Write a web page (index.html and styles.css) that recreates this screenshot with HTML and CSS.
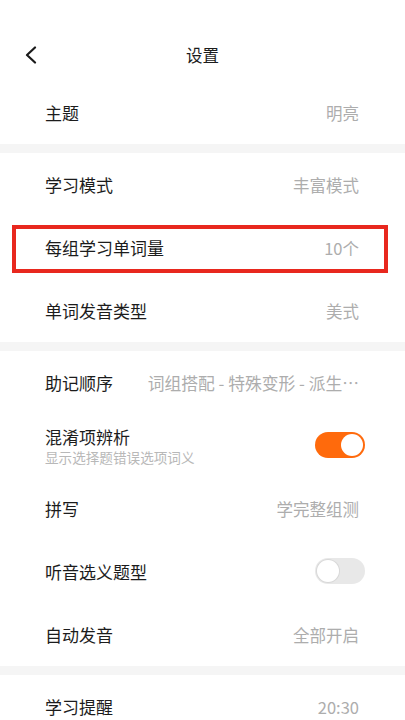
FILE: index.html
```html
<!DOCTYPE html>
<html lang="zh-CN">
<head>
<meta charset="utf-8">
<title>设置</title>
<link rel="stylesheet" href="styles.css">
</head>
<body>
<div class="page">
  <header class="header">
    <span class="back">
      <svg width="14" height="18" viewBox="0 0 14 18"><path d="M11 1.5 L3 9 L11 16.5" fill="none" stroke="#1a1a1a" stroke-width="2.2" stroke-linecap="round" stroke-linejoin="round"/></svg>
    </span>
    <h1 class="title">设置</h1>
  </header>

  <section class="group">
    <div class="row first"><span class="label">主题</span><span class="value">明亮</span></div>
  </section>
  <div class="gap"></div>

  <section class="group">
    <div class="row"><span class="label">学习模式</span><span class="value">丰富模式</span></div>
    <div class="row highlighted"><span class="label">每组学习单词量</span><span class="value">10个</span><span class="mark"></span></div>
    <div class="row"><span class="label">单词发音类型</span><span class="value">美式</span></div>
  </section>
  <div class="gap"></div>

  <section class="group">
    <div class="row"><span class="label">助记顺序</span><span class="value long">词组搭配 - 特殊变形 - 派生…</span></div>
    <div class="row">
      <div class="stack"><span class="label">混淆项辨析</span><span class="sub">显示选择题错误选项词义</span></div>
      <span class="toggle on"><span class="knob"></span></span>
    </div>
    <div class="row"><span class="label">拼写</span><span class="value">学完整组测</span></div>
    <div class="row">
      <span class="label">听音选义题型</span>
      <span class="toggle off"><span class="knob"></span></span>
    </div>
    <div class="row"><span class="label">自动发音</span><span class="value">全部开启</span></div>
  </section>
  <div class="gap"></div>

  <section class="group">
    <div class="row"><span class="label">学习提醒</span><span class="value">20:30</span></div>
  </section>
</div>
</body>
</html>
```

FILE: styles.css
```css
* { box-sizing: border-box; }
html, body {
  margin: 0;
  padding: 0;
  background: #ffffff;
}
body {
  font-family: "Noto Sans CJK SC", "Noto Sans", sans-serif;
  color: #1c1c1c;
  width: 405px;
  height: 720px;
  overflow: hidden;
}
.page {
  display: flex;
  flex-direction: column;
}
.header {
  height: 82px;
  display: flex;
  align-items: flex-start;
  justify-content: center;
  padding-top: 44px;
  position: relative;
}
.back {
  position: absolute;
  left: 24px;
  top: 46px;
  display: flex;
}
.title {
  margin: 0;
  font-size: 16.5px;
  line-height: 22px;
  font-weight: 400;
  color: #1c1c1c;
}
.group {
  display: flex;
  flex-direction: column;
}
.gap {
  height: 9px;
  background: #f5f5f5;
}
.row {
  height: 63px;
  display: flex;
  align-items: center;
  justify-content: space-between;
  padding: 0 40px 0 45px;
  position: relative;
}
.row.first {
  height: 62px;
}
.label {
  font-size: 17px;
  line-height: 22px;
  color: #1c1c1c;
}
.value {
  font-size: 16.5px;
  line-height: 22px;
  color: #adadad;
  padding-right: 6px;
  white-space: nowrap;
}
.value.long {
  font-size: 16.8px;
}
.stack {
  display: flex;
  flex-direction: column;
  padding-top: 1px;
}
.sub {
  font-size: 13.6px;
  line-height: 19px;
  color: #b8b8b8;
}
.toggle {
  width: 50px;
  height: 26px;
  border-radius: 13px;
  display: flex;
  align-items: center;
  padding: 2px;
  margin-top: -1px;
}
.toggle .knob {
  width: 22px;
  height: 22px;
  border-radius: 50%;
  background: #ffffff;
}
.toggle.on {
  background: #ff6a0c;
  justify-content: flex-end;
}
.toggle.off {
  background: #e8e8e8;
  justify-content: flex-start;
}
.toggle.off .knob {
  box-shadow: 0 0 0 1px #d8d8d8;
}
.mark {
  position: absolute;
  left: 12px;
  right: 17px;
  top: 9px;
  bottom: 6px;
  border: 4px solid #e8281e;
  pointer-events: none;
}
```
